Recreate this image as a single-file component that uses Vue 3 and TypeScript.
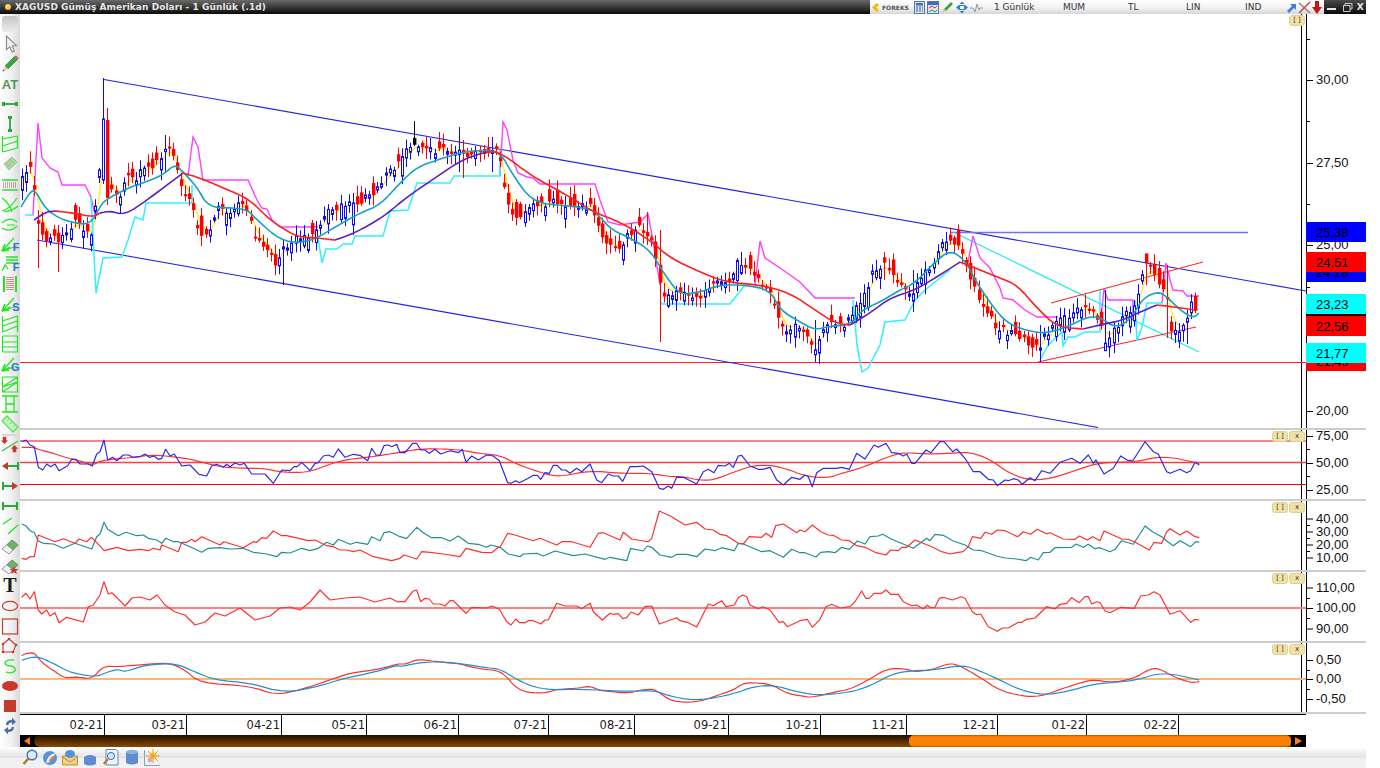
<script setup lang="ts">
type P = [number, number]
const parse = (s: string, ox = 0, oy = 0, k = 1): P[] =>
  s.trim().split(/\s+/).map((t) => {
    const [a, b] = t.split(',').map(Number)
    return [a / k + ox, b / k + oy] as P
  })
const z = (s: string, ox: number, oy = 430) => parse(s, ox, oy, 3)
const pts = (p: P[]) => p.map(([x, y]) => `${x.toFixed(1)},${y.toFixed(1)}`).join(' ')
const at = (p: P[], x: number) => {
  if (x <= p[0][0]) return p[0][1]
  for (let i = 1; i < p.length; i++) {
    if (x <= p[i][0]) {
      const t = (x - p[i - 1][0]) / (p[i][0] - p[i - 1][0] || 1)
      return p[i - 1][1] + t * (p[i][1] - p[i - 1][1])
    }
  }
  return p[p.length - 1][1]
}
// corner cutting: makes the moving averages as round as in the original
const smooth = (p: P[], n = 2): P[] => {
  let out = p
  for (let r = 0; r < n; r++) {
    const next: P[] = [out[0]]
    for (let i = 0; i < out.length - 1; i++) {
      const [a, b] = out[i]
      const [c, d] = out[i + 1]
      next.push([a * 0.75 + c * 0.25, b * 0.75 + d * 0.25], [a * 0.25 + c * 0.75, b * 0.25 + d * 0.75])
    }
    next.push(out[out.length - 1])
    out = next
  }
  return out
}

// seeded noise so the picture is the same every run
let seed = 20210
const rnd = () => {
  seed = (seed * 1664525 + 1013904223) % 4294967296
  return seed / 4294967296
}

const trace = parse(`22,180 26,172 30,162 34,185 38,222 45,238 52,235 60,245 68,228 75,222 84,232 92,238 97,190 101,165 104,130 109,165 113,195 120,198 128,172 135,180 145,165 155,168 165,148 175,158 183,190 192,205 200,232 208,240 216,208 226,212 240,205 248,212 256,240 268,250 276,268 284,250 296,240 308,238 318,225 328,212 340,205 352,205 365,198 378,188 388,168 400,165 408,150 416,140 425,150 438,152 452,150 464,155 478,152 490,150 498,150 504,185 510,212 520,218 532,208 544,205 552,198 564,205 578,208 590,205 598,228 608,245 622,248 630,232 640,228 650,235 656,262 662,296 672,296 684,290 696,300 708,288 720,282 730,285 738,262 748,265 758,282 770,288 776,315 784,332 796,325 806,330 814,356 820,335 830,325 846,325 856,305 866,296 874,270 884,265 894,275 904,288 914,292 924,275 934,262 944,238 954,240 964,252 972,285 984,305 994,325 1006,332 1020,335 1030,345 1040,345 1048,332 1058,322 1068,316 1080,308 1090,312 1098,316 1106,340 1116,328 1126,312 1134,308 1140,285 1146,262 1152,272 1160,285 1166,295 1172,332 1180,328 1188,322 1192,300 1197,315`)

interface Candle { x: number; top: number; bot: number; hi: number; lo: number; up: boolean; black?: boolean }
const wickFix: Record<number, [number, number]> = {
  104: [78, 184], 108: [108, 205], 166: [135, 172], 282: [240, 285], 416: [121, 146], 458: [127, 172], 465: [140, 178], 493: [137, 172],
  648: [212, 245], 660: [230, 342], 740: [252, 275], 815: [320, 362], 885: [252, 280], 945: [232, 255], 1039: [325, 362], 1147: [255, 285], 1107: [290, 346], 40: [210, 268], 60: [225, 272], 1187: [310, 344], 1168: [265, 338], 914: [270, 312],
}
const candles: Candle[] = []
for (let x = 22; x <= 1197; x += 4.09) {
  const cx = Math.floor(x) + 0.5
  const slope = at(trace, x + 5) - at(trace, x - 5)
  const c = at(trace, x) + (rnd() - 0.5) * 8
  const up = rnd() < 0.5 - slope * 0.03
  const size = 2 + rnd() * rnd() * 20
  const o = up ? c + size : c - size
  const top = Math.min(o, c)
  const bot = Math.max(o, c)
  const key = Object.keys(wickFix).map(Number).find((k) => Math.abs(k - x) < 2.05)
  let hi = top - 2 - rnd() * 9
  let lo = bot + 2 + rnd() * 9
  if (key !== undefined) {
    hi = wickFix[key][0]
    lo = wickFix[key][1]
  }
  candles.push({
    x: cx,
    top: key === 104 ? 119 : key === 108 ? 120 : top,
    bot: key === 104 ? 180 : key === 108 ? 198 : bot,
    hi,
    lo,
    up: key === 104 ? true : key === 108 ? false : up,
    black: key === 416,
  })
}
let ema = 180
const yellow: P[] = candles.map((cd) => {
  ema += ((cd.up ? cd.top : cd.bot) - ema) * 0.5
  return [cd.x, ema]
})

const teal = smooth(parse(`21,207 30,192 35,190 45,208 57,217 70,222 90,225 100,207 105,200 128,188 143,183 163,175 175,164 183,172 197,187 208,207 233,208 248,210 257,220 280,240 300,243 317,238 335,227 360,213 380,205 400,183 417,167 443,158 463,152 483,150 500,152 513,175 527,195 540,203 557,205 577,207 593,210 600,217 612,230 630,238 650,250 665,275 680,295 700,292 720,285 745,285 770,290 780,310 800,322 815,330 830,326 850,325 862,310 880,302 900,290 915,283 935,262 950,250 965,260 975,280 995,310 1010,325 1033,332 1047,333 1067,327 1087,317 1100,317 1115,328 1130,320 1143,298 1157,292 1165,295 1180,310 1193,318 1199,313`))
const trendSegs = [
  { c: '#5a1fc0', p: parse('34,220 46,212 55,211') },
  { c: '#ff1f1f', p: parse('55,211 73,213 93,217 100,213') },
  { c: '#5a1fc0', p: parse('100,213 110,211 125,215 147,200 163,188 183,173') },
  { c: '#ff1f1f', p: parse('183,173 200,178 233,192 250,200 270,220 290,233 300,237 317,238 335,240') },
  { c: '#5a1fc0', p: parse('335,240 355,233 383,217 407,197 432,180 463,159 487,152') },
  { c: '#ff1f1f', p: parse('487,152 500,152 533,177 567,195 593,212 620,222 650,240 670,258 700,272 725,282 760,285 790,293 815,310 835,323 850,325') },
  { c: '#5a1fc0', p: parse('850,325 870,313 890,298 915,290 940,275 960,262') },
  { c: '#ff1f1f', p: parse('960,262 975,268 1000,278 1017,285 1037,308 1057,327 1083,329') },
  { c: '#5a1fc0', p: parse('1083,329 1100,325 1123,320 1140,312 1157,305') },
  { c: '#ff1f1f', p: parse('1157,305 1167,306 1195,310') },
].map((s) => ({ c: s.c, p: smooth(s.p) }))
const magenta = [
  '33,215 38,123 42,158 50,168 58,172 62,185 85,185 91,197 95,215',
  '188,176 193,137 198,147 203,180 248,180 257,200 262,208 267,209 272,220 280,227 318,227',
  '500,176 503,122 507,130 513,160 518,173 527,177 533,178 540,184 595,184 600,200 608,222 620,225 640,222 648,214 652,235 660,285',
  '755,285 760,241 765,258 780,268 800,282 815,298 855,298',
  '968,262 973,236 980,258 990,268 1000,288 1003,298 1013,300 1025,310 1037,317 1058,317',
  '1100,327 1104,289 1108,300 1133,300 1133,320',
  '1162,303 1166,263 1170,280 1173,290 1183,291 1187,296 1199,296',
].map((s) => pts(parse(s)))
const cyan = [
  '25,215 34,215',
  '91,197 96,293 103,258 122,257 128,240 135,217 143,220 146,203 192,203 192,185',
  '318,238 322,263 326,249 337,249 343,244 352,244 355,236 383,236 390,211 408,210 417,183 450,183 454,176 500,176 500,150',
  '660,300 662,304 730,304 737,295 745,285',
  '853,300 857,345 862,372 868,368 880,345 885,322 905,320 915,300 925,290 950,270',
  '1040,360 1048,345 1062,332 1063,346 1068,337 1075,337 1085,332 1100,332 1100,290',
  '1135,300 1137,341 1142,327 1147,303 1163,303',
].map((s) => pts(parse(s)))

// lower panes
const rsiBlue = [
  ...z('65,35 78,30 90,45 103,50 115,112 128,120 140,102 152,110 165,102 177,122 190,115 203,107 215,88 228,88 240,102 265,102 277,108 290,72 300,65 312,30 323,90 338,82 350,92 370,75 385,75 400,82 420,80 435,72 448,82 462,78 475,88 485,85 497,58 510,78 523,72 545,108 560,106 570,105 597,133 620,138 635,108 650,103 670,112 680,103 690,110 705,99 720,105 733,100 755,132 795,132 820,160 845,120 870,122 882,110 892,110 905,97 930,122 945,100 955,98 970,78 985,75 1000,82 1015,57 1035,82 1060,73 1080,76 1103,92 1115,55 1128,75 1140,75 1152,47 1165,45 1175,50 1190,43 1200,68', 0),
  ...z('15,68 38,40 50,40 62,60 75,60 88,70 105,58 122,72 150,62 175,68 187,58 198,97 215,78 235,90 260,75 280,78 298,92 323,158 333,160 347,152 358,158 385,145 400,136 412,136 422,148 435,128 448,130 460,106 472,106 485,120 497,120 510,130 530,115 545,125 570,102 590,150 605,158 625,132 640,138 655,138 668,154 690,110 710,110 730,108 755,125 778,175 790,178 805,168 815,175 830,142 850,142 890,162 910,125 925,118 942,128 955,106 975,108 988,100 1000,112 1015,78 1025,76 1050,108 1075,118 1088,118 1110,112 1130,150 1150,165 1175,142 1200,148', 400),
  ...z('15,135 25,140 37,170 50,128 70,115 110,115 125,112 148,118 170,70 195,87 222,45 235,52 258,40 275,68 295,70 310,78 320,72 335,100 345,100 378,60 393,68 420,35 432,35 458,65 470,57 495,85 520,125 540,125 565,148 580,150 592,167 615,150 625,152 640,146 655,150 667,163 690,143 705,152 725,122 750,130 780,97 815,85 840,100 865,75 880,100 888,90 912,132 940,115 962,78 985,92 1000,90 1035,35 1060,65 1075,72 1100,125 1110,130 1140,118 1160,128 1172,122 1185,97 1198,105', 800),
]
const rsiRed = smooth([
  ...z('65,52 100,52 115,58 160,70 205,85 240,92 275,106 305,92 345,87 400,82 450,75 500,78 570,87 610,98 660,110 720,115 790,115 830,124 880,128 930,125 980,106 1030,90 1100,82 1150,75 1200,67', 0),
  ...z('50,58 110,56 185,60 235,70 300,76 350,102 400,120 450,136 490,138 570,122 660,130 750,130 810,140 850,140 900,151 940,150 1000,127 1060,106 1120,106 1175,122 1200,133', 400),
  ...z('45,142 90,142 125,130 190,112 240,90 290,72 320,68 380,72 450,70 510,66 570,88 620,125 680,150 750,147 830,120 900,97 1000,97 1090,77 1198,100', 800),
])
const dmiTeal = [
  ...z('65,282 78,288 90,302 103,308 115,333 130,340 160,342 190,355 205,348 225,340 275,357 290,320 300,312 312,277 323,298 355,317 378,307 410,317 430,315 445,325 470,330 485,340 497,325 520,335 535,335 570,350 605,367 625,355 660,353 690,357 730,355 760,367 800,372 830,380 845,367 870,369 905,355 930,362 955,355 980,337 1000,345 1015,328 1050,343 1070,337 1103,343 1115,320 1140,332 1152,308 1170,305 1200,320', 0),
  ...z('20,325 50,292 70,308 95,323 125,323 150,333 175,318 205,340 235,343 260,352 272,345 300,352 325,372 360,380 370,372 410,370 430,378 465,363 520,377 555,372 615,388 630,382 680,392 692,355 730,363 742,348 755,352 780,375 815,382 830,373 860,373 890,380 915,357 945,362 965,353 1003,362 1015,340 1030,342 1085,365 1110,362 1150,382 1175,358 1200,368', 400),
  ...z('15,368 48,381 62,367 85,365 105,368 125,352 148,358 172,333 195,342 210,320 235,318 248,313 275,328 340,355 380,325 390,332 405,313 430,316 460,333 495,345 520,360 545,362 590,378 615,384 650,387 678,392 692,382 715,390 730,368 750,367 765,353 815,352 828,342 850,352 865,343 885,356 900,353 930,365 945,358 965,332 1000,343 1035,288 1060,307 1085,320 1103,335 1120,347 1140,332 1172,350 1187,335 1198,337', 800),
]
const dmiRed = [
  ...z('65,385 78,388 90,380 103,380 115,315 165,335 190,326 225,340 237,327 260,335 275,322 313,362 350,352 385,362 420,358 445,362 460,355 480,360 485,345 535,365 545,337 560,337 575,328 585,335 605,320 660,345 672,335 730,353 760,335 770,337 785,323 800,325 820,303 845,317 860,317 925,332 945,330 980,347 1000,350 1020,360 1040,360 1060,365 1080,360 1120,380 1175,392 1200,385', 0),
  ...z('12,375 50,387 65,365 90,367 130,372 180,380 198,355 245,367 275,368 295,352 300,352 323,310 345,315 400,332 420,325 470,345 485,335 515,335 570,352 595,310 610,308 660,330 670,307 695,327 730,333 745,335 755,325 778,243 815,260 855,285 890,277 915,297 940,300 960,313 980,317 1015,340 1030,342 1048,320 1085,322 1098,310 1115,322 1127,287 1150,282 1190,308 1200,300', 400),
  ...z('15,305 37,285 62,305 85,315 100,316 125,330 148,332 170,347 195,352 225,367 258,375 272,360 295,362 305,352 320,352 345,330 395,350 425,365 450,372 470,368 490,365 505,350 517,320 542,325 555,307 575,313 592,300 615,302 653,320 670,305 692,313 712,298 740,312 750,308 790,327 825,328 838,318 862,330 878,320 900,332 912,303 965,327 985,328 1003,335 1048,360 1062,337 1085,340 1100,305 1110,296 1140,315 1160,303 1185,320 1198,323', 800),
]
const momRed = [
  ...z('65,322 78,310 90,327 103,305 115,360 125,372 140,360 150,378 165,368 177,398 200,382 250,396 265,350 280,345 300,315 312,275 325,312 335,308 350,322', 0, 490),
  ...parse('125,606 132,598 140,597 150,600 157,595 165,605 175,612 185,615 195,625 205,622 215,613 225,616 240,608 255,620 270,616 280,608 290,607 300,610 310,602 320,590 330,600 345,598 360,597 375,602 390,598 398,602'),
  ...z('0,515 15,515 38,484 50,480 62,515 75,505 88,507 100,522 120,522 135,528 150,512 160,512 198,550 215,532 260,534 275,528 298,538 320,575 333,585 347,567 358,578 375,578 385,572 400,572 422,582 435,570 445,570 470,520 495,528 530,528 545,536 570,520 580,545 607,570 630,550 640,553 655,551 668,566 680,563 693,546 715,555 735,530 755,528 778,582 830,563 840,572 865,578 890,591 925,522 940,527 965,512 978,530 1003,525 1015,503 1028,495 1040,500 1050,525 1075,536 1088,530 1110,540 1137,577 1150,575 1162,590 1200,572', 400),
  ...z('22,568 37,592 60,568 78,530 95,523 120,534 150,530 165,515 185,483 197,505 207,505 222,490 245,490 258,480 272,493 295,493 310,515 335,527 350,525 370,537 382,526 393,533 405,532 418,505 430,502 457,510 483,500 495,505 517,545 530,554 542,552 565,590 592,604 607,594 625,594 655,577 665,577 680,568 705,564 740,530 765,537 780,523 800,520 815,503 838,518 855,500 865,500 875,522 890,515 900,518 915,543 930,548 962,532 1003,535 1022,498 1045,495 1062,485 1080,495 1110,553 1140,542 1172,577 1185,568 1198,570', 800),
]
const macdRed = smooth([
  ...z('65,497 78,490 103,488 115,505 135,525 165,545 195,565 230,560 275,568 310,528 350,530', 0, 490),
  ...parse('125,666 150,664 170,663 185,670 200,683 250,686 275,695 300,690 330,680 350,673 375,670 398,664'),
  ...z('0,702 20,702 50,688 90,692 140,698 185,702 200,708 245,717 295,722 320,740 340,765 370,785 420,790 450,785 470,778 530,775 570,768 600,782 640,785 680,790 750,775 775,785 815,815 890,817 950,797 1000,780 1030,760 1060,758 1115,763 1160,790 1200,797', 400),
  ...z('35,803 100,787 150,778 205,750 260,716 315,716 345,726 400,718 440,702 470,702 540,742 600,782 665,798 720,800 790,775 830,762 880,748 930,758 1000,747 1050,716 1080,716 1120,740 1170,758 1198,755', 800),
])
const macdBlue = smooth([
  ...z('65,510 110,498 160,520 205,545 250,555 290,560 325,545 355,538', 0, 490),
  ...parse('125,672 145,665 175,663 195,672 215,680 250,683 285,693 320,686 345,678 375,672 398,665'),
  ...z('0,710 60,698 110,695 180,700 250,712 300,717 340,742 390,768 450,780 540,777 680,785 760,780 820,802 900,812 1000,792 1060,770 1120,765 1200,788', 400),
  ...z('60,796 150,787 210,768 280,730 340,722 400,720 480,706 520,714 600,750 660,780 730,795 800,785 880,762 950,757 1010,750 1090,726 1198,750', 800),
])

const panes = [
  {
    top: 430, h: 69,
    levels: [{ y: 441, c: '#ff8080', w: 2 }, { y: 462.5, c: '#ff4040', w: 1.3 }, { y: 484.5, c: '#ff0000', w: 1.2 }],
    series: [{ c: '#ff3030', p: pts(rsiRed) }, { c: '#2a2af0', p: pts(rsiBlue) }],
    labels: [{ t: '75,00', y: 436 }, { t: '50,00', y: 463 }, { t: '25,00', y: 490 }],
    minors: [449, 476],
  },
  {
    top: 501, h: 69, levels: [],
    series: [{ c: '#1f9090', p: pts(dmiTeal) }, { c: '#ff3030', p: pts(dmiRed) }],
    labels: [{ t: '40,00', y: 518.5 }, { t: '30,00', y: 531.5 }, { t: '20,00', y: 544.5 }, { t: '10,00', y: 557.5 }],
    minors: [525, 538, 551],
  },
  {
    top: 572, h: 69, levels: [{ y: 608, c: '#ff8080', w: 2 }],
    series: [{ c: '#ff3030', p: pts(momRed) }],
    labels: [{ t: '110,00', y: 587.5 }, { t: '100,00', y: 608 }, { t: '90,00', y: 628.5 }],
    minors: [598, 618],
  },
  {
    top: 643, h: 69, levels: [{ y: 679, c: '#ffb870', w: 2 }],
    series: [{ c: '#ff3030', p: pts(macdRed) }, { c: '#2090d0', p: pts(macdBlue) }],
    labels: [{ t: '0,50', y: 660 }, { t: '0,00', y: 679 }, { t: '-0,50', y: 699 }],
    minors: [670, 689],
  },
]

const mainLabels = [
  { t: '30,00', y: 80 }, { t: '27,50', y: 163 }, { t: '25,00', y: 245 }, { t: '20,00', y: 411 },
]
const mainMinors = [39, 121, 204, 287, 370]
const tags = [
  { t: '24,18', y: 262, bg: '#0000ff', c: '#000' },
  { t: '25,38', y: 222, bg: '#0000ff', c: '#000' },
  { t: '24,51', y: 252, bg: '#ff0000', c: '#000' },
  { t: '', y: 296, bg: '#000000', c: '#fff' },
  { t: '23,23', y: 294, bg: '#00ffff', c: '#000' },
  { t: '21,49', y: 351, bg: '#ff0000', c: '#000' },
  { t: '22,56', y: 316, bg: '#ff0000', c: '#000' },
  { t: '21,77', y: 343, bg: '#00ffff', c: '#000' },
]

const ticks = [104, 186, 281, 366, 458, 548, 634, 728, 820, 906, 997, 1086, 1178]
const months = ['02-21', '03-21', '04-21', '05-21', '06-21', '07-21', '08-21', '09-21', '10-21', '11-21', '12-21', '01-22', '02-22']
const dates = months.map((m, i) => ({ m, w: ticks[i] + 1 - (i ? ticks[i - 1] + 1 : 20) }))

const menu = [
  { t: '1 Günlük', w: 69 }, { t: 'MUM', w: 65 }, { t: 'TL', w: 58 }, { t: 'LIN', w: 59 }, { t: 'IND', w: 41 },
]

const G = '#22e622'
const D = '#2aa83a'
const R = '#c43a2c'
const letter = (l: string) => `<text x="19.5" y="17" text-anchor="end" font-family="Liberation Sans" font-size="11" font-weight="bold" fill="#2f6fdc">${l}</text>`
const fan = `<path d="M2 17 L14 4 M2 17 L17 12 M2 17 L10 13" stroke="${G}" stroke-width="1.3" fill="none"/><path d="M2 17 L5 10 M2 17 L9 16" stroke="${G}" stroke-width="1.6" fill="none"/>`
const tools: string[] = [
  `<defs><linearGradient id="tg0" x1="0" y1="0" x2="0" y2="1"><stop offset="0" stop-color="#c4c4c4"/><stop offset="1" stop-color="#ececec"/></linearGradient></defs><rect x="2" y="2" width="16" height="16" rx="3" fill="url(#tg0)"/>`,
  `<path d="M6.5 2 L6.5 15.5 L9.8 12.8 L12 18 L14.5 17 L12.3 12 L16.5 11.5 Z" fill="#eee" stroke="#8a8a8a" stroke-width="1.1"/>`,
  `<path d="M5 12 L14.5 2.5 L17.5 5.5 L8 15 Z" fill="#39a53c" stroke="#1f7a2a" stroke-width=".6"/><path d="M14.5 2.5 L16 1.2 L18.8 4 L17.5 5.5 Z" fill="#e0605a"/><path d="M5 12 L2.5 17.5 L8 15 Z" fill="#e7c9a0"/><path d="M3.4 15.6 L2.5 17.5 L4.4 16.6 Z" fill="#222"/>`,
  `<text x="10" y="15" text-anchor="middle" font-family="Liberation Sans" font-size="13" font-weight="bold" fill="#4f9a55">AT</text>`,
  `<path d="M3 10 H17" stroke="${D}" stroke-width="1.8"/><rect x="2" y="8" width="3" height="4" fill="${D}"/><rect x="15" y="8" width="3" height="4" fill="${D}"/>`,
  `<path d="M10 3 V17" stroke="${D}" stroke-width="1.8"/><rect x="8" y="2" width="4" height="3" fill="${D}"/><rect x="8" y="15" width="4" height="3" fill="${D}"/>`,
  `<path d="M2.5 2 V12 M17.5 2 V14 M2.5 5 L17.5 2 M2.5 12 L17.5 7 M2.5 18 L17.5 14 M2.5 18 V12" stroke="${G}" stroke-width="1.2" fill="none"/>`,
  `<path d="M4 10 L12 3 L17 8 L9 16 Z" fill="#9fdca0" stroke="#7cc884" stroke-width=".8"/><path d="M6 10 L12 5 M8 12 L14 7" stroke="#e59a8c" stroke-width="1.5" stroke-dasharray="1 1"/>`,
  `<path d="M2 6 H18 M2 16 H18" stroke="${G}" stroke-width="1.4"/><path d="M3 9 H17 M3 11 H17 M3 13 H17" stroke="#b34545" stroke-width="1.2" stroke-dasharray="1 1"/>`,
  `<path d="M2 4 Q10 10 12 18 M2 17 Q10 15 17 4 M4 18 Q14 16 18 12" stroke="${G}" stroke-width="1.2" fill="none"/>`,
  `<path d="M2 9 Q10 2 17 8 M2 14 Q10 19 17 12 M7 11 H15" stroke="${G}" stroke-width="1.2" fill="none"/>`,
  fan + letter('F'),
  `<path d="M2 17 L5 11 L8 15" stroke="${G}" stroke-width="1.2" fill="none"/><path d="M6 3 H18 M6 6 H18 M6 9 H18" stroke="${G}" stroke-width="1.3"/>` + letter('F'),
  `<path d="M4 2 V18 M16 2 V18" stroke="${G}" stroke-width="2"/><path d="M7 3 V17 M9 3 V17 M11 3 V17 M13 3 V17" stroke="#b34545" stroke-width="1.2" stroke-dasharray="1 1"/>`,
  fan + letter('S'),
  `<path d="M2.5 2 V18 M17.5 2 V18 M2.5 7 L17.5 2 M2.5 12 L17.5 7 M2.5 18 L17.5 12" stroke="${G}" stroke-width="1.2" fill="none"/>`,
  `<path d="M2.5 2 V18 M17.5 2 V18 M2.5 2 H17.5 M2.5 8 H17.5 M2.5 13 H17.5 M2.5 18 H17.5" stroke="${G}" stroke-width="1.2" fill="none"/>`,
  fan + letter('G'),
  `<path d="M2.5 3 H17.5 V8 L2.5 13 V18 H17.5 V3 M2.5 3 V13 L17.5 3 M2.5 18 L17.5 8" stroke="${G}" stroke-width="1.1" fill="none"/>`,
  `<path d="M2 2 H18 M2 18 H18 M6 2 V18 M14 2 V18 M6 10 H14" stroke="${G}" stroke-width="1.3" fill="none"/>`,
  `<path d="M2 7 L7 2 L18 13 L13 18 Z" fill="#c8f5c8" stroke="#58e058" stroke-width="1.3"/><path d="M7 7 L9 5 M10 10 L12 8 M13 13 L15 11" stroke="#58e058"/>`,
  `<path d="M2 15 L18 5" stroke="#47b84a" stroke-width="1.2"/><path d="M3 2 H7 V6 H9 L5 10 L1 6 H3 Z" fill="${R}" transform="translate(0,-1) scale(.9)"/><path d="M15 9 L19 13 H17 V17 H13 V13 H11 Z" fill="${R}" transform="translate(1,1) scale(.9)"/>`,
  `<path d="M8 10 H17" stroke="${D}" stroke-width="2"/><path d="M18 6 V14" stroke="${D}" stroke-width="2"/><path d="M2 10 L8 6 V14 Z" fill="${R}"/>`,
  `<path d="M3 10 H12" stroke="${D}" stroke-width="2"/><path d="M3 6 V14" stroke="${D}" stroke-width="2"/><path d="M18 10 L12 6 V14 Z" fill="${R}"/>`,
  `<path d="M3 10 H17" stroke="${D}" stroke-width="2"/><path d="M3 6 V14 M17 6 V14" stroke="${D}" stroke-width="2"/>`,
  `<path d="M3 8 L12 2 M8 18 L18 9" stroke="${G}" stroke-width="1.3"/>`,
  `<path d="M2 13 L12 4 L18 9 L9 18 Z" fill="#f2f2f2" stroke="#999"/><path d="M7 9 L12 4 L18 9 L13 14 Z" fill="#6fb06f" stroke="#4a8a4a" stroke-width=".6"/>`,
  `<path d="M2 13 L12 4 L18 9 L9 18 Z" fill="#f2f2f2" stroke="#999"/><path d="M7 9 L12 4 L18 9 L13 14 Z" fill="#6fb06f" stroke="#4a8a4a" stroke-width=".6"/><path d="M14 10 L15.3 13 L18.5 13 L16 15 L17 18 L14 16.3 L11 18 L12 15 L9.5 13 L12.7 13 Z" fill="${R}"/>`,
  `<text x="10" y="16" text-anchor="middle" font-family="Liberation Serif" font-size="20" font-weight="bold" fill="#1c1c1c">T</text>`,
  `<ellipse cx="10" cy="10" rx="7.6" ry="4.6" fill="none" stroke="${R}" stroke-width="1.2"/>`,
  `<rect x="2.5" y="3" width="15" height="15" fill="none" stroke="${R}" stroke-width="1.2"/>`,
  `<path d="M3 16 L3 8 L9 3 L16 9 L13 16 Z" fill="none" stroke="${R}" stroke-width="1.1"/><circle cx="3" cy="16" r="1.3" fill="${R}"/><circle cx="3" cy="8" r="1.3" fill="${R}"/><circle cx="9" cy="3" r="1.3" fill="${R}"/><circle cx="16" cy="9" r="1.3" fill="${R}"/><circle cx="13" cy="16" r="1.3" fill="${R}"/>`,
  `<path d="M14 4 Q6 3 5 7 Q6 10 11 10 Q16 11 15 15 Q12 18 6 16" stroke="${G}" stroke-width="1.3" fill="none"/>`,
  `<ellipse cx="10" cy="10" rx="8" ry="5" fill="${R}"/>`,
  `<rect x="4" y="4" width="12" height="12" fill="${R}"/>`,
  `<path d="M6 9 Q6 4 12 4 L12 1.5 L16 6 L12 9 L12 6.5 Q8 6.5 8.5 9 Z" fill="#4a6fa8"/><path d="M14 11 Q14 16 8 16 L8 18.5 L4 14 L8 11 L8 13.5 Q12 13.5 11.5 11 Z" fill="#4a6fa8"/>`,
]
const toolsTop = tools.slice(0, 21)
const toolsBottom = tools.slice(21)
</script>

<template>
  <div class="app">
    <header class="titlebar">
      <div class="caption">
        <i class="dot"></i>
        <span>XAGUSD Gümüş Amerikan Doları - 1 Günlük (.1d)</span>
      </div>
      <div class="ribbon">
        <div class="logo">
          <svg width="11" height="11" viewBox="0 0 11 11"><path d="M7 1 L2 5.5 L7 10 L9 8 L6 5.5 L9 3 Z" fill="#f2b800" /></svg>
          <span>FOREKS</span>
        </div>
        <svg class="ri" width="11" height="13" viewBox="0 0 11 13"><rect x=".5" y=".5" width="10" height="12" fill="#d8e6f4" stroke="#5578a8" /><rect x="2" y="2" width="7" height="2.5" fill="#3d6fc0" /><path d="M2 6 H4 M5 6 H7 M8 6 H9 M2 8 H4 M5 8 H7 M8 8 H9 M2 10 H4 M5 10 H7 M8 10 H9" stroke="#3a5a90" /></svg>
        <svg class="ri" width="12" height="13" viewBox="0 0 12 13"><rect x=".5" y=".5" width="11" height="12" fill="#dfe8f2" stroke="#5578a8" /><rect x="1" y="1" width="10" height="3" fill="#3d6fc0" /><path d="M2 7 L5 5 L8 7 L10 5" stroke="#d33" fill="none" /><path d="M2 11 L5 9 L8 11 L10 9" stroke="#2a9a3a" fill="none" /></svg>
        <svg class="ri" width="13" height="13" viewBox="0 0 13 13"><path d="M3 8 L10 1 L12 3 L5 10 Z" fill="#3aa53c" /><path d="M3 8 L1 12 L5 10 Z" fill="#e0c090" /></svg>
        <svg class="ri" width="12" height="13" viewBox="0 0 12 13"><path d="M6 0.5 L8.5 3 H3.5 Z M6 12.5 L8.5 10 H3.5 Z M0 6.5 L3 4 V9 Z M12 6.5 L9 4 V9 Z" fill="#2f7fd8" /><rect x="3.5" y="4.5" width="5" height="4" fill="none" stroke="#2f7fd8" /></svg>
        <svg class="ri" width="13" height="13" viewBox="0 0 13 13"><path d="M0 7 H3 L5 11 L7 3 L9 9 L10 7 H13" stroke="#8a9aa8" fill="none" /></svg>
        <div class="menu">
          <span v-for="m in menu" :key="m.t" :style="{ width: m.w + 'px' }">{{ m.t }}</span>
        </div>
        <svg class="re" width="11" height="11" viewBox="0 0 11 11"><path d="M2 10 L1 9 L6 4 L4 2 H10 V8 L8 6 L3 11 Z" fill="#3f7fd8" /></svg>
        <svg class="re" width="13" height="13" viewBox="0 0 13 13"><path d="M1 2 L12 12" stroke="#888" stroke-width="1.6" /><path d="M12 1 L2 11" stroke="#d04a3a" stroke-width="1.6" /><path d="M1 11 L3 12" stroke="#888" stroke-width="1.6" /></svg>
        <svg class="re last" width="10" height="13" viewBox="0 0 10 13"><path d="M3 0 H7 V6 H10 L5 13 L0 6 H3 Z" fill="#c01818" /></svg>
      </div>
      <div class="win">
        <svg width="11" height="11" viewBox="0 0 11 11"><rect x="1" y="6" width="9" height="2" fill="#e8e8e8" /></svg>
        <svg width="11" height="11" viewBox="0 0 11 11"><path d="M3 3 V1.5 H10 V7 H8 M1.5 3.5 H8 V9.5 H1.5 Z" fill="none" stroke="#ccc" /></svg>
        <span>X</span>
      </div>
    </header>

    <div class="workspace">
      <aside class="toolbar">
        <div v-for="(t, i) in toolsTop" :key="'a' + i" class="tool">
          <svg width="20" height="20" viewBox="0 0 20 20" v-html="t"></svg>
        </div>
        <div class="tool-sep"></div>
        <div v-for="(t, i) in toolsBottom" :key="'b' + i" class="tool">
          <svg width="20" height="20" viewBox="0 0 20 20" v-html="t"></svg>
        </div>
      </aside>

      <section class="charts">
        <div class="pane main">
          <svg class="plot" width="1286" height="414" viewBox="20 14 1286 414">
            <line x1="1301.5" y1="14" x2="1301.5" y2="428" stroke="#000" />
            <line x1="20" y1="362.5" x2="1306" y2="362.5" stroke="#ff2020" stroke-width="1.1" />
            <line x1="104" y1="79.5" x2="1306" y2="291" stroke="#2222e8" stroke-width="1.1" />
            <line x1="37" y1="240" x2="1098" y2="427.5" stroke="#2222e8" stroke-width="1.1" />
            <line x1="950" y1="232.5" x2="1248" y2="232.5" stroke="#7070f0" stroke-width="1.6" />
            <line x1="953" y1="232" x2="1199" y2="352" stroke="#20ecec" stroke-width="1.2" />
            <line x1="1038" y1="362" x2="1196" y2="327" stroke="#ff2a2a" stroke-width="1.2" />
            <line x1="1051" y1="303" x2="1203" y2="262" stroke="#ff2a2a" stroke-width="1.2" />
            <polyline :points="pts(yellow)" fill="none" stroke="#ffe93a" stroke-width="1.4" />
            <polyline v-for="(p, i) in magenta" :key="'m' + i" :points="p" fill="none" stroke="#ff40ff" stroke-width="1.4" />
            <polyline v-for="(p, i) in cyan" :key="'c' + i" :points="p" fill="none" stroke="#30f0ff" stroke-width="1.5" />
            <g v-for="(k, i) in candles" :key="i">
              <line :x1="k.x" :y1="k.hi" :x2="k.x" :y2="k.lo" :stroke="k.black ? '#000' : k.up ? '#0a0af5' : '#ff0000'" stroke-width="1" />
              <rect v-if="k.up" :x="k.x - 1" :y="k.top" width="2" :height="k.bot - k.top" fill="#fff" stroke="#0a0af5" stroke-width="1" />
              <rect v-else :x="k.x - 1.5" :y="k.top" width="3.4" :height="k.bot - k.top" :fill="k.black ? '#000' : '#ff0000'" />
            </g>
            <polyline :points="pts(teal)" fill="none" stroke="#15a3c2" stroke-width="1.6" stroke-linejoin="round" />
            <polyline v-for="(s, i) in trendSegs" :key="'t' + i" :points="pts(s.p)" fill="none" :stroke="s.c" stroke-width="1.6" stroke-linejoin="round" />
          </svg>
          <svg class="axis" width="60" height="414" viewBox="1306 14 60 414">
            <line v-for="m in mainMinors" :key="m" x1="1306" :y1="m + 0.5" x2="1310" :y2="m + 0.5" stroke="#000" />
            <g v-for="l in mainLabels" :key="l.t">
              <line x1="1306" :y1="l.y + 0.5" x2="1313" :y2="l.y + 0.5" stroke="#000" />
              <text x="1316" :y="l.y + 4">{{ l.t }}</text>
            </g>
            <g v-for="g in tags" :key="g.y">
              <rect x="1306" :y="g.y" width="60" height="20" :fill="g.bg" />
              <text v-if="g.t" x="1316" :y="g.y + 14.5" :fill="g.c">{{ g.t }}</text>
            </g>
          </svg>
          <div class="pane-btns"><b>[ ]</b></div>
        </div>

        <div v-for="(p, i) in panes" :key="i" class="pane sub">
          <svg class="plot" width="1286" :height="p.h" :viewBox="`20 ${p.top} 1286 ${p.h}`">
            <line x1="1301.5" :y1="p.top" x2="1301.5" :y2="p.top + p.h" stroke="#000" />
            <line v-for="l in p.levels" :key="l.y" x1="20" :y1="l.y" x2="1306" :y2="l.y" :stroke="l.c" :stroke-width="l.w" />
            <polyline v-for="s in p.series" :key="s.c" :points="s.p" fill="none" :stroke="s.c" stroke-width="1.2" stroke-linejoin="round" />
          </svg>
          <svg class="axis" width="60" :height="p.h" :viewBox="`1306 ${p.top} 60 ${p.h}`">
            <line v-for="m in p.minors" :key="m" x1="1306" :y1="m + 0.5" x2="1310" :y2="m + 0.5" stroke="#000" />
            <g v-for="l in p.labels" :key="l.t">
              <line x1="1306" :y1="l.y + 0.5" x2="1313" :y2="l.y + 0.5" stroke="#000" />
              <text x="1316" :y="l.y + 4">{{ l.t }}</text>
            </g>
          </svg>
          <div class="pane-btns"><b>[ ]</b><b>x</b></div>
        </div>

        <div class="dates">
          <span v-for="d in dates" :key="d.m" :style="{ width: d.w + 'px' }">{{ d.m }}</span>
        </div>
        <div class="scroll">
          <i class="arr left"></i>
          <div class="track"><div class="thumb"></div></div>
          <i class="arr right"></i>
        </div>
      </section>
    </div>

    <footer class="bottom">
      <svg width="16" height="17" viewBox="0 0 16 17"><circle cx="10" cy="6" r="4.8" fill="#dcecfa" stroke="#3f74b0" stroke-width="1.4" /><path d="M6.5 9.5 L1.5 15" stroke="#b8772a" stroke-width="2.6" /></svg>
      <svg width="16" height="17" viewBox="0 0 16 17"><circle cx="8" cy="9" r="7" fill="#5c90d8" /><path d="M4 14 Q6 5 14 4 L11 8 Q8 9 8 13 Z" fill="#fff" /><path d="M6 13 Q8 7 13 6 Q11 11 6 13" fill="#e8932a" /></svg>
      <svg width="16" height="17" viewBox="0 0 16 17"><path d="M.5 7 H15.5 V16 H.5 Z" fill="#f2cf83" stroke="#b8923f" /><ellipse cx="8" cy="5" rx="5" ry="4" fill="#5b8fd8" /><path d="M.5 8 L8 13 L15.5 8" fill="none" stroke="#b8923f" /></svg>
      <svg class="b4" width="14" height="17" viewBox="0 0 14 17"><path d="M1 8 Q7 4 13 8 V15 Q7 18 1 15 Z" fill="#5f8cd0" /></svg>
      <svg class="b5" width="16" height="17" viewBox="0 0 16 17"><path d="M3 .5 H13 L15 2.5 V16 H3 Z" fill="#eef3fa" stroke="#6a86b0" /><circle cx="8" cy="7" r="3.6" fill="#cfe2f6" stroke="#3f74b0" /><path d="M5 10 L.8 15" stroke="#b8772a" stroke-width="2.2" /></svg>
      <svg class="b6" width="12" height="17" viewBox="0 0 12 17"><path d="M0 3 Q6 0 12 3 V14 Q6 17 0 14 Z" fill="#5f8cd0" /><ellipse cx="6" cy="3" rx="6" ry="2.2" fill="#8cb0e4" /></svg>
      <svg class="b7" width="16" height="17" viewBox="0 0 16 17"><path d="M.5 1 V16.5 H16" fill="none" stroke="#8aa0c0" /><circle cx="9" cy="7" r="3.6" fill="#f7d23c" /><path d="M9 0 V14 M2 7 H16 M4 2 L14 12 M14 2 L4 12" stroke="#ef9d1f" /><circle cx="6" cy="11" r="2.4" fill="#e0a0d0" /></svg>
    </footer>
  </div>
</template>

<style scoped>
.app {
  width: 1380px;
  height: 768px;
  display: flex;
  flex-direction: column;
  overflow: hidden;
  font-family: "DejaVu Sans", sans-serif;
  background: #fff;
}
.titlebar {
  display: flex;
  height: 14px;
  flex: none;
}
.caption {
  width: 870px;
  display: flex;
  align-items: center;
  gap: 4px;
  padding-left: 4px;
  box-sizing: border-box;
  background: linear-gradient(#6a6a6a, #0a0a0a);
  color: #e6e6e6;
  font-size: 9px;
  font-weight: bold;
  letter-spacing: 0.06px;
}
.dot {
  width: 6px;
  height: 6px;
  margin-left: 1px;
  border-radius: 50%;
  background: radial-gradient(circle at 40% 35%, #ffe27a, #e8a400);
}
.ribbon {
  width: 454px;
  display: flex;
  align-items: center;
  background: linear-gradient(#ffffff, #f2f2f2 55%, #d6d6d6);
}
.logo {
  display: flex;
  align-items: center;
  gap: 1px;
  width: 44px;
  font-size: 6px;
  font-weight: bold;
  color: #555;
}
.ri {
  margin-right: 2px;
  flex: none;
}
.menu {
  display: flex;
  margin-left: 9px;
  font-size: 9px;
  color: #333;
}
.re {
  flex: none;
  margin-right: 1px;
}
.win {
  width: 42px;
  display: flex;
  align-items: center;
  justify-content: space-around;
  background: linear-gradient(#4a4a4a, #0a0a0a);
  color: #e8e8e8;
  font-size: 9px;
  font-weight: bold;
}
.workspace {
  display: flex;
  width: 1366px;
  flex: none;
}
.toolbar {
  width: 20px;
  height: 733px;
  flex: none;
  background: linear-gradient(90deg, #ffffff, #f0f0f0 60%, #d8d8d8);
}
.tool {
  height: 20px;
}
.tool svg {
  display: block;
  overflow: visible;
}
.tool-sep {
  height: 2px;
  margin: 0 2px;
  background: #d8d8d8;
}
.charts {
  width: 1346px;
  display: flex;
  flex-direction: column;
}
.pane {
  display: flex;
  position: relative;
  border-bottom: 2px solid #cdcdcd;
}
.plot {
  display: block;
  flex: none;
}
.axis {
  display: block;
  flex: none;
  overflow: visible;
  box-shadow: inset 1px 0 0 #000;
  font-family: "Liberation Sans", sans-serif;
  font-size: 13px;
  fill: #111;
}
.pane-btns {
  position: absolute;
  right: 61px;
  top: 1px;
  display: flex;
  gap: 1px;
}
.pane-btns b {
  width: 14px;
  height: 9px;
  line-height: 8px;
  text-align: center;
  font-size: 7px;
  font-weight: normal;
  color: #333;
  background: #f0e1a6;
  border: 1px solid #e0d090;
  border-radius: 3px;
  box-sizing: content-box;
}
.dates {
  display: flex;
  width: 1286px;
  height: 21px;
  box-sizing: border-box;
  border-top: 1px solid #000;
  font-size: 11.5px;
  color: #222;
}
.dates span {
  box-sizing: border-box;
  border-right: 1px solid #000;
  text-align: right;
  padding-right: 1px;
  line-height: 20px;
}
.scroll {
  display: flex;
  align-items: center;
  width: 1286px;
  height: 12px;
  background: #000;
}
.arr {
  flex: none;
  width: 0;
  height: 0;
  border-top: 4px solid transparent;
  border-bottom: 4px solid transparent;
}
.arr.left {
  margin: 0 4px;
  border-right: 6px solid #ff8000;
}
.arr.right {
  margin: 0 4px;
  border-left: 7px solid #ff8000;
}
.track {
  flex: 1;
  height: 12px;
  border-radius: 6px 0 0 6px;
  background: linear-gradient(#1f0f00, #8a4800);
  position: relative;
}
.thumb {
  position: absolute;
  left: 875px;
  right: 0;
  top: 0;
  bottom: 0;
  border-radius: 5px;
  background: linear-gradient(#a85400 0, #ff8000 15%, #ff8000 85%, #b85c00 100%);
}
.bottom {
  width: 1366px;
  height: 21px;
  flex: none;
  display: flex;
  align-items: flex-start;
  gap: 4px;
  box-sizing: border-box;
  padding: 2px 0 0 22px;
  background: linear-gradient(#ffffff, #e2e2e2 50%, #f0f0f0 52%, #f2f2f2);
}
.bottom svg {
  flex: none;
}
.bottom .b4 {
  margin-left: 1px;
}
.bottom .b5 {
  margin-left: 2px;
}
.bottom .b6 {
  margin-left: 3px;
}
.bottom .b7 {
  margin-left: 2px;
}
</style>

<style>
html,
body {
  margin: 0;
  background: #fff;
}
</style>
